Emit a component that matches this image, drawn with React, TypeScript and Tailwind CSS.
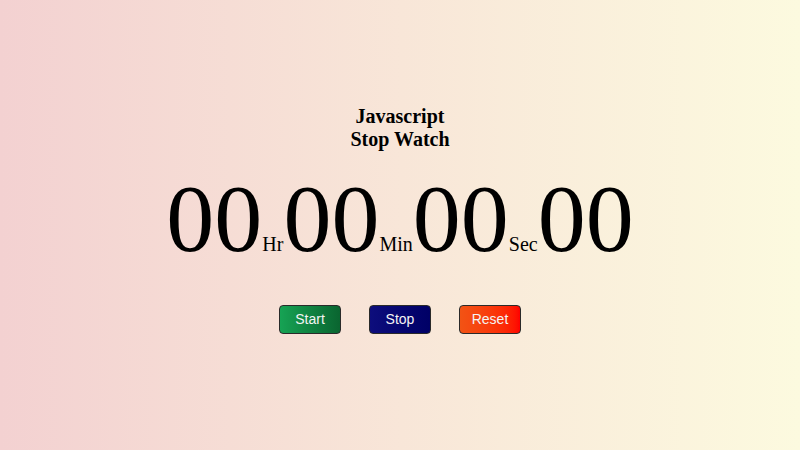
export default function App() {
  return (
    <div className="w-full h-[450px] bg-gradient-to-r from-[#f3d1d1] via-[#f8e6d8] to-[#fcfadf] flex flex-col items-center font-['Liberation_Serif',serif] text-black">
      <h1 className="mt-[105px] text-[20px] font-bold leading-[23px] text-center">
        Javascript
        <br />
        Stop Watch
      </h1>
      <div className="mt-[20px] flex items-baseline leading-none">
        <span className="text-[96px]">00</span>
        <span className="text-[20px]">Hr</span>
        <span className="text-[96px]">00</span>
        <span className="text-[20px]">Min</span>
        <span className="text-[96px]">00</span>
        <span className="text-[20px]">Sec</span>
        <span className="text-[96px]">00</span>
      </div>
      <div className="mt-[38px] flex gap-[28px] font-['Liberation_Sans',sans-serif] text-[14px] text-[#f4f4f4]">
        <button className="w-[62px] h-[29px] rounded-[4px] border border-[#2a2a2a] bg-gradient-to-r from-[#16a354] to-[#0a6530]">
          Start
        </button>
        <button className="w-[62px] h-[29px] rounded-[4px] border border-[#2a2a2a] bg-gradient-to-r from-[#0d0d7c] to-[#000066]">
          Stop
        </button>
        <button className="w-[62px] h-[29px] rounded-[4px] border border-[#2a2a2a] bg-gradient-to-r from-[#f25314] to-[#ff0000]">
          Reset
        </button>
      </div>
    </div>
  );
}
